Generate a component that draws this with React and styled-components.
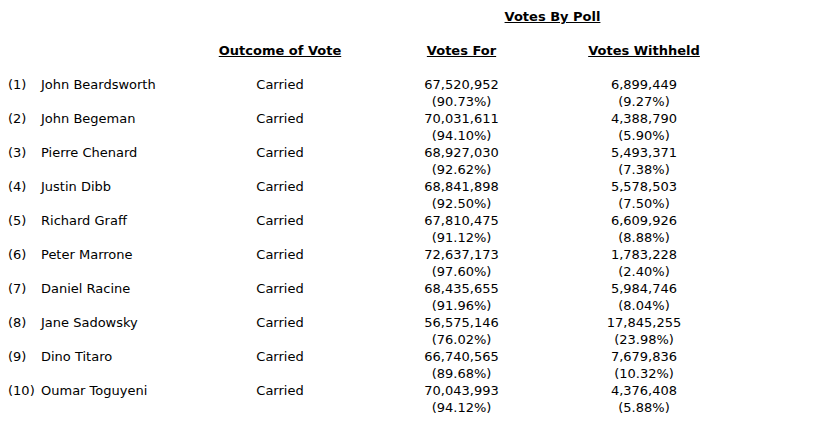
import styled, { createGlobalStyle } from "styled-components"

const GlobalStyle = createGlobalStyle`
body {
    margin: 8px;
    background: #ffffff;
    color: #000000;
    font-family: "DejaVu Sans", Verdana, sans-serif;
    font-size: 13px;
    line-height: 17px;
}
`

const results = [
    { n: 1, name: "John Beardsworth", forV: "67,520,952", forP: "90.73%", wV: "6,899,449", wP: "9.27%" },
    { n: 2, name: "John Begeman", forV: "70,031,611", forP: "94.10%", wV: "4,388,790", wP: "5.90%" },
    { n: 3, name: "Pierre Chenard", forV: "68,927,030", forP: "92.62%", wV: "5,493,371", wP: "7.38%" },
    { n: 4, name: "Justin Dibb", forV: "68,841,898", forP: "92.50%", wV: "5,578,503", wP: "7.50%" },
    { n: 5, name: "Richard Graff", forV: "67,810,475", forP: "91.12%", wV: "6,609,926", wP: "8.88%" },
    { n: 6, name: "Peter Marrone", forV: "72,637,173", forP: "97.60%", wV: "1,783,228", wP: "2.40%" },
    { n: 7, name: "Daniel Racine", forV: "68,435,655", forP: "91.96%", wV: "5,984,746", wP: "8.04%" },
    { n: 8, name: "Jane Sadowsky", forV: "56,575,146", forP: "76.02%", wV: "17,845,255", wP: "23.98%" },
    { n: 9, name: "Dino Titaro", forV: "66,740,565", forP: "89.68%", wV: "7,679,836", wP: "10.32%" },
    { n: 10, name: "Oumar Toguyeni", forV: "70,043,993", forP: "94.12%", wV: "4,376,408", wP: "5.88%" },
]

const App = () => {
    return (
        <>
            <GlobalStyle />
            <VoteTable>
                <Head $span="3 / 5" $gap>Votes By Poll</Head>

                <Blank />
                <Head $gap>Outcome of Vote</Head>
                <Head $gap>Votes For</Head>
                <Head $gap>Votes Withheld</Head>

                {results.map((r) => (
                    <Row key={r.n}>
                        <NameCell>
                            <Num>({r.n})</Num>
                            {r.name}
                        </NameCell>
                        <Cell>Carried</Cell>
                        <Cell>
                            {r.forV}
                            <br />({r.forP})
                        </Cell>
                        <Cell>
                            {r.wV}
                            <br />({r.wP})
                        </Cell>
                    </Row>
                ))}
            </VoteTable>
        </>
    )
}
export default App

const VoteTable = styled.div`
display: grid;
grid-template-columns: 182px 180px 183px 182px;
`

const Head = styled.div`
grid-column: ${(p) => p.$span || "auto"};
text-align: center;
font-weight: bold;
text-decoration: underline;
margin-bottom: ${(p) => (p.$gap ? "17px" : "0")};
`

const Blank = styled.div``

const Row = styled.div`
display: contents;
`

const Cell = styled.div`
text-align: center;
height: 34px;
`

const NameCell = styled.div`
height: 34px;
white-space: nowrap;
`

const Num = styled.span`
display: inline-block;
width: 33px;
`
